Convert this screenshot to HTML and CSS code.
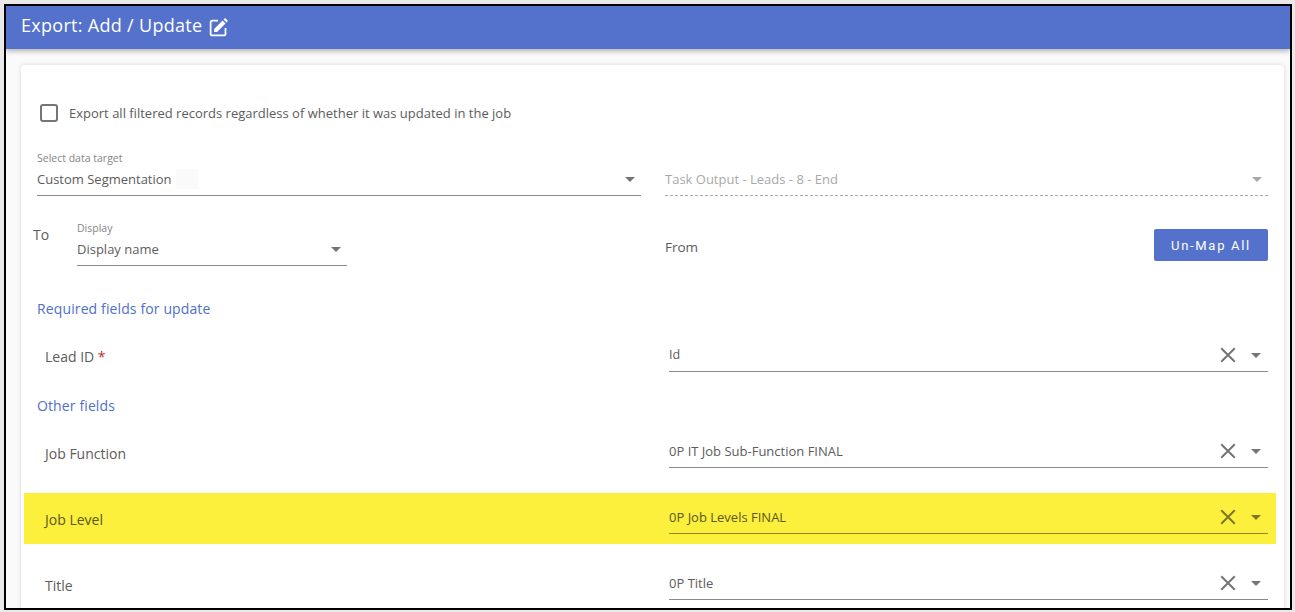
FILE: index.html
```html
<!DOCTYPE html>
<html lang="en">
<head>
<meta charset="utf-8">
<title>Export: Add / Update</title>
<link rel="stylesheet" href="styles.css">
</head>
<body>
<div class="frame">
  <header class="topbar">
    <h1 class="title">Export: Add / Update</h1>
    <svg class="edit-icon" viewBox="0 0 24 24" width="24" height="24" aria-hidden="true">
      <path fill="none" stroke="#fff" stroke-width="2" stroke-linejoin="round" d="M11.5 4H5a2 2 0 0 0-2 2v13a2 2 0 0 0 2 2h13a2 2 0 0 0 2-2v-6.5"/>
      <path fill="#fff" d="M7 17v-3.4L16.6 4l3.4 3.4L10.4 17zM17.8 2.8l1-1a1 1 0 0 1 1.4 0l2 2a1 1 0 0 1 0 1.4l-1 1z"/>
    </svg>
  </header>
  <main class="page">
    <section class="card">
      <label class="check-row">
        <span class="checkbox"></span>
        <span class="check-text">Export all filtered records regardless of whether it was updated in the job</span>
      </label>

      <div class="target-row">
        <div class="select target">
          <span class="select-label">Select data target</span>
          <div class="select-value"><span>Custom Segmentation</span><span class="redacted"></span><span class="arrow"></span></div>
        </div>
        <div class="select target disabled">
          <div class="select-value"><span>Task Output - Leads - 8 - End</span><span class="arrow"></span></div>
        </div>
      </div>

      <div class="to-row">
        <div class="to-side">
          <span class="to-label">To</span>
          <div class="select display">
            <span class="select-label">Display</span>
            <div class="select-value"><span>Display name</span><span class="arrow"></span></div>
          </div>
        </div>
        <div class="from-side">
          <span class="from-label">From</span>
          <button class="btn" type="button">Un-Map All</button>
        </div>
      </div>

      <h2 class="section first">Required fields for update</h2>
      <div class="map-row lead">
        <span class="field">Lead ID <em class="req">*</em></span>
        <div class="map-select"><span class="map-value">Id</span><svg class="clear" viewBox="0 0 16 16" width="16" height="16"><path d="M2 2l12 12M14 2L2 14"/></svg><span class="arrow"></span></div>
      </div>

      <h2 class="section other">Other fields</h2>
      <div class="map-row after-heading">
        <span class="field">Job Function</span>
        <div class="map-select"><span class="map-value">0P IT Job Sub-Function FINAL</span><svg class="clear" viewBox="0 0 16 16" width="16" height="16"><path d="M2 2l12 12M14 2L2 14"/></svg><span class="arrow"></span></div>
      </div>
      <div class="map-row highlight">
        <span class="field">Job Level</span>
        <div class="map-select"><span class="map-value">0P Job Levels FINAL</span><svg class="clear" viewBox="0 0 16 16" width="16" height="16"><path d="M2 2l12 12M14 2L2 14"/></svg><span class="arrow"></span></div>
      </div>
      <div class="map-row">
        <span class="field">Title</span>
        <div class="map-select"><span class="map-value">0P Title</span><svg class="clear" viewBox="0 0 16 16" width="16" height="16"><path d="M2 2l12 12M14 2L2 14"/></svg><span class="arrow"></span></div>
      </div>
    </section>
  </main>
</div>
</body>
</html>
```
FILE: styles.css
```css
* { box-sizing: border-box; }
html, body { margin: 0; height: 100%; overflow: hidden; }
body {
  background: #e9e9e9;
  padding: 4px 3px 2px 4px;
  font-family: "Open Sans", "Liberation Sans", sans-serif;
  color: #4a4a4a;
}
.frame {
  height: 606px;
  border: 2px solid #000;
  background: #fafafa;
  overflow: hidden;
  display: flex;
  flex-direction: column;
}
.topbar {
  flex: none;
  height: 43px;
  background: #5472cb;
  box-shadow: 0 2px 5px rgba(0, 0, 0, .3);
  display: flex;
  align-items: center;
  padding: 0 0 6px 15px;
  gap: 6px;
  position: relative;
}
.title {
  margin: 0;
  font-size: 18px;
  font-weight: 400;
  color: #fff;
  letter-spacing: .3px;
}
.edit-icon { width: 21px; height: 21px; margin-top: 6px; }
.page { flex: 1; padding: 16px 6px 0 15px; min-height: 0; }
.card {
  height: 600px;
  background: #fff;
  border-radius: 4px;
  box-shadow: 0 0 4px rgba(0, 0, 0, .14);
  padding: 38px 16px 0 16px;
  position: relative;
}
.check-row { display: flex; align-items: center; height: 20px; margin-left: 3px; gap: 11px; }
.checkbox { width: 18px; height: 18px; border: 2px solid #757575; border-radius: 3px; }
.check-text { font-size: 13px; color: #5c5c5c; }

.target-row { display: flex; justify-content: space-between; margin-top: 24px; }
.select { display: flex; flex-direction: column; justify-content: flex-end; }
.target { width: 604px; height: 49px; }
.target.disabled { width: 603px; color: #a8a8a8; }
.select-label { font-size: 10.5px; line-height: 14px; color: #858585; margin-bottom: 7px; }
.select-value {
  display: flex;
  align-items: center;
  height: 24px;
  font-size: 13px;
  border-bottom: 1px solid #8a8a8a;
  padding-bottom: 10px;
  color: #5c5c5c;
}
.disabled .select-value { color: #a8a8a8; border-bottom: 1px dashed #aaa; }
.redacted { width: 22px; height: 20px; background: #fafafa; margin-left: 4px; flex: none; }
.arrow {
  margin-left: auto;
  margin-right: 6px;
  margin-top: 1px;
  width: 0;
  height: 0;
  border-left: 5px solid transparent;
  border-right: 5px solid transparent;
  border-top: 5px solid #757575;
  flex: none;
}
.disabled .arrow { border-top-color: #a8a8a8; }

.to-row { display: flex; height: 50px; margin-top: 20px; }
.to-side { width: 604px; display: flex; margin-left: -4px; }
.to-label { font-size: 14px; width: 44px; padding-top: 9px; color: #5c5c5c; }
.display { width: 270px; height: 50px; }
.from-side { flex: 1; margin-left: 28px; display: flex; justify-content: space-between; align-items: flex-start; padding-top: 13px; }
.from-label { font-size: 13.5px; line-height: 36px; color: #5c5c5c; }
.btn {
  width: 114px;
  height: 32px;
  border: 0;
  border-radius: 2px;
  background: #5472cb;
  color: #fff;
  font: 400 13px "Roboto", "Liberation Sans", sans-serif;
  letter-spacing: 1.7px;
}

.section { margin: 0; font-size: 14px; font-weight: 400; color: #4f6fc9; line-height: 20px; letter-spacing: .12px; }
.section.first { margin-top: 33px; }
.section.other { margin-top: 14px; }

.map-row { display: flex; align-items: center; height: 51px; margin: 0 -8px 0 -13px; padding: 0 8px 0 21px; }
.map-row.lead { margin-top: 12px; }
.map-row.after-heading { margin-top: 11px; }
.field { width: 624px; font-size: 14px; color: #5c5c5c; padding-top: 2px; }
.lead .field { padding-top: 0; }
.req { font-style: normal; color: #c62828; }
.highlight { background: #fcf03c; margin-top: 15px; }
.highlight + .map-row { margin-top: 15px; }
.map-select {
  flex: 1;
  display: flex;
  align-items: center;
  height: 30px;
  border-bottom: 1px solid #8a8a8a;
  padding-bottom: 3px;
}
.map-value { font-size: 13px; color: #5c5c5c; flex: 1; }
.lead .map-value { font-size: 12.5px; }
.clear { width: 18px; height: 18px; margin-right: 14px; }
.clear path { stroke: #757575; stroke-width: 1.8; fill: none; }
.map-select .arrow { margin-left: 0; margin-right: 7px; }
.highlight .field, .highlight .map-value { color: #5a5620; }
.highlight .map-select { border-bottom-color: #8f8620; }
.highlight .clear path { stroke: #7d7625; }
.highlight .arrow { border-top-color: #7d7625; }
```
